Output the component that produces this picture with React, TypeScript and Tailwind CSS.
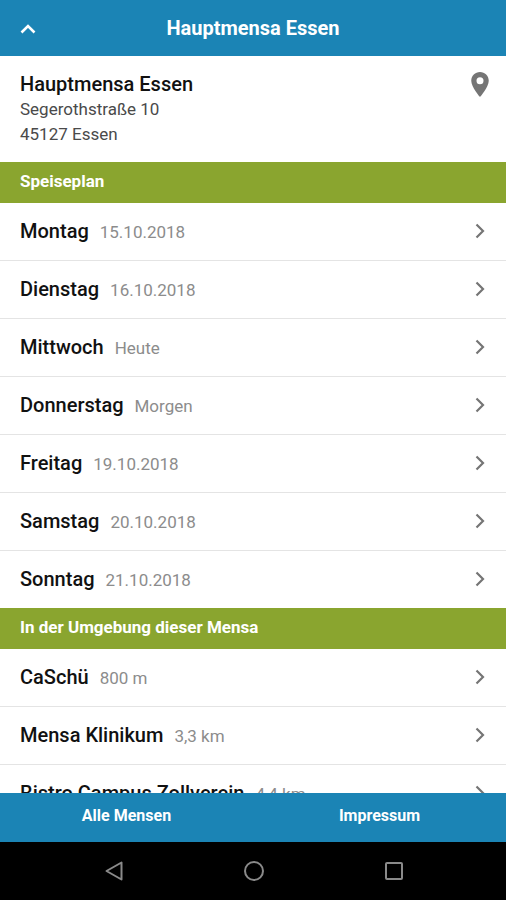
type Entry = { name: string; detail: string };

const days: Entry[] = [
  { name: "Montag", detail: "15.10.2018" },
  { name: "Dienstag", detail: "16.10.2018" },
  { name: "Mittwoch", detail: "Heute" },
  { name: "Donnerstag", detail: "Morgen" },
  { name: "Freitag", detail: "19.10.2018" },
  { name: "Samstag", detail: "20.10.2018" },
  { name: "Sonntag", detail: "21.10.2018" },
];

const nearby: Entry[] = [
  { name: "CaSchü", detail: "800 m" },
  { name: "Mensa Klinikum", detail: "3,3 km" },
  { name: "Bistro Campus Zollverein", detail: "4,4 km" },
];

function SectionTitle({ children }: { children: string }) {
  return (
    <h2 className="flex h-[41px] items-center bg-[#8aa52f] px-5 pb-[3px] text-[17px] leading-6 font-bold text-white">
      {children}
    </h2>
  );
}

function EntryList({ entries }: { entries: Entry[] }) {
  return (
    <ul className="divide-y divide-[#e4e4e4]">
      {entries.map((entry) => (
        <li key={entry.name}>
          <a href="#" className="flex h-[57px] items-center justify-between px-5 pb-px">
            <span className="flex items-baseline gap-[11px]">
              <span className="text-[20px] leading-6 font-medium text-[#111]">{entry.name}</span>
              <span className="text-[17px] leading-6 text-[#8c8c8c]">{entry.detail}</span>
            </span>
            <svg viewBox="0 0 12 18" className="h-[18px] w-3" fill="none" stroke="#757575" strokeWidth="2.2" aria-hidden="true">
              <path d="M2.5 2.5 9 9l-6.5 6.5" />
            </svg>
          </a>
        </li>
      ))}
    </ul>
  );
}

export default function App() {
  return (
    <div className="flex h-screen flex-col bg-white font-[Roboto,sans-serif]">
      <header className="grid h-14 shrink-0 grid-cols-[56px_1fr_56px] items-center bg-[#1b84b5] text-white">
        <button type="button" aria-label="Zurück" className="flex h-14 items-center pt-px pl-5">
          <svg viewBox="0 0 16 12" className="h-3 w-4" fill="none" stroke="currentColor" strokeWidth="2.6" aria-hidden="true">
            <path d="M1.5 9.5 8 3l6.5 6.5" />
          </svg>
        </button>
        <h1 className="text-center text-[20px] leading-6 font-bold">Hauptmensa Essen</h1>
      </header>

      <main className="min-h-0 flex-1 overflow-y-auto [scrollbar-width:none]">
        <section className="flex items-start justify-between px-5 pt-4 pb-[15px]">
          <address className="text-[17px] leading-[25px] text-[#4a4a4a] not-italic">
            <strong className="block text-[20px] leading-[25px] font-medium text-[#111]">Hauptmensa Essen</strong>
            Segerothstraße 10
            <br />
            45127 Essen
          </address>
          <button type="button" aria-label="Auf Karte anzeigen" className="-mr-1 flex h-6 w-5 items-center justify-center">
            <svg viewBox="5 2 14 20" className="h-[25px] w-[18px]" fill="#757575" aria-hidden="true">
              <path d="M12 2C8.13 2 5 5.13 5 9c0 5.25 7 13 7 13s7-7.75 7-13c0-3.87-3.13-7-7-7zm0 9.8a2.8 2.8 0 1 1 0-5.6 2.8 2.8 0 0 1 0 5.6z" />
            </svg>
          </button>
        </section>
        <SectionTitle>Speiseplan</SectionTitle>
        <EntryList entries={days} />
        <SectionTitle>In der Umgebung dieser Mensa</SectionTitle>
        <EntryList entries={nearby} />
      </main>

      <nav className="grid h-[49px] shrink-0 grid-cols-2 bg-[#1b84b5] pb-1 text-base leading-6 font-bold text-white">
        <a href="#" className="flex items-center justify-center">Alle Mensen</a>
        <a href="#" className="flex items-center justify-center">Impressum</a>
      </nav>

      <div className="flex h-[58px] shrink-0 items-center justify-center gap-[116px] bg-black pl-px text-[#8a8a8a]">
        <button type="button" aria-label="Zurück">
          <svg viewBox="0 0 24 24" className="size-6" fill="none" stroke="currentColor" strokeWidth="2" strokeLinejoin="round" aria-hidden="true">
            <path d="M19.5 3.5v17L4.5 12z" />
          </svg>
        </button>
        <button type="button" aria-label="Startbildschirm">
          <svg viewBox="0 0 24 24" className="size-6" fill="none" stroke="currentColor" strokeWidth="2" aria-hidden="true">
            <circle cx="12" cy="12" r="9" />
          </svg>
        </button>
        <button type="button" aria-label="Übersicht">
          <svg viewBox="0 0 24 24" className="size-6" fill="none" stroke="currentColor" strokeWidth="2" aria-hidden="true">
            <rect x="4" y="4" width="16" height="16" rx="1" />
          </svg>
        </button>
      </div>
    </div>
  );
}
